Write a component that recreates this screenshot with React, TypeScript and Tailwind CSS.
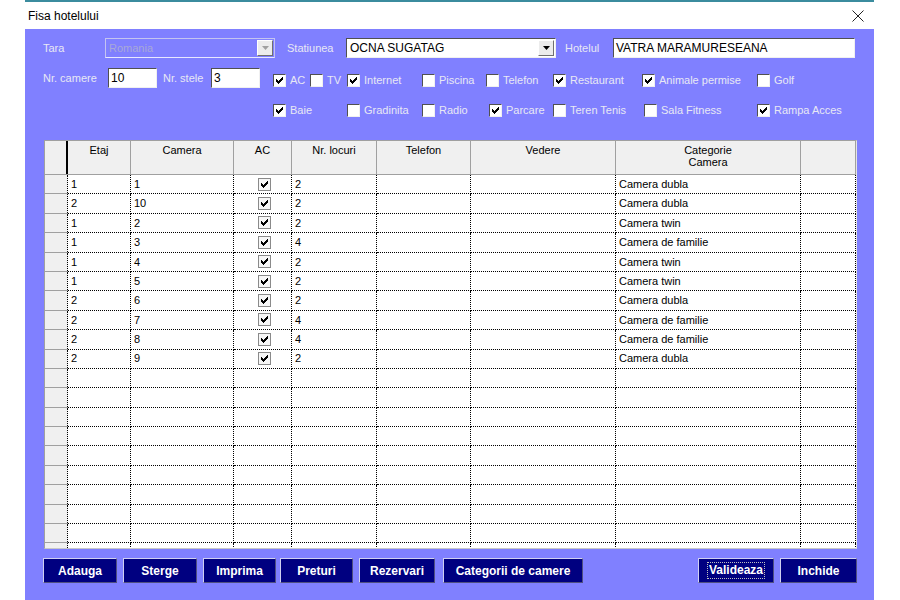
import React from 'react';

const FONT = { fontFamily: '"Liberation Sans", Arial, sans-serif' };

type Room = { etaj: string; camera: string; locuri: string; cat: string };

const ROOMS: Room[] = [
  { etaj: '1', camera: '1', locuri: '2', cat: 'Camera dubla' },
  { etaj: '2', camera: '10', locuri: '2', cat: 'Camera dubla' },
  { etaj: '1', camera: '2', locuri: '2', cat: 'Camera twin' },
  { etaj: '1', camera: '3', locuri: '4', cat: 'Camera de familie' },
  { etaj: '1', camera: '4', locuri: '2', cat: 'Camera twin' },
  { etaj: '1', camera: '5', locuri: '2', cat: 'Camera twin' },
  { etaj: '2', camera: '6', locuri: '2', cat: 'Camera dubla' },
  { etaj: '2', camera: '7', locuri: '4', cat: 'Camera de familie' },
  { etaj: '2', camera: '8', locuri: '4', cat: 'Camera de familie' },
  { etaj: '2', camera: '9', locuri: '2', cat: 'Camera dubla' },
];

const ROW1 = [
  { label: 'AC', on: true, w: 'w-[37px]' },
  { label: 'TV', on: false, w: 'w-[37px]' },
  { label: 'Internet', on: true, w: 'w-[75px]' },
  { label: 'Piscina', on: false, w: 'w-[64px]' },
  { label: 'Telefon', on: false, w: 'w-[67px]' },
  { label: 'Restaurant', on: true, w: 'w-[89px]' },
  { label: 'Animale permise', on: true, w: 'w-[115px]' },
  { label: 'Golf', on: false, w: 'w-[60px]' },
];

const ROW2 = [
  { label: 'Baie', on: true, w: 'w-[74px]' },
  { label: 'Gradinita', on: false, w: 'w-[75px]' },
  { label: 'Radio', on: false, w: 'w-[67px]' },
  { label: 'Parcare', on: true, w: 'w-[64px]' },
  { label: 'Teren Tenis', on: false, w: 'w-[91px]' },
  { label: 'Sala Fitness', on: false, w: 'w-[113px]' },
  { label: 'Rampa Acces', on: true, w: 'w-[100px]' },
];

const GRID_COLS = 'grid grid-cols-[23px_63px_103px_58px_85px_94px_145px_185px_55px]';

// classic 7x7 pixel check mark
function Tick() {
  return (
    <svg viewBox="0 0 7 7" className="w-[7px] h-[7px]" shapeRendering="crispEdges">
      <path d="M6 0h1v3h-1zM5 1h1v3h-1zM4 2h1v3h-1zM3 3h1v3h-1zM2 4h1v3h-1zM1 3h1v3h-1zM0 2h1v3h-1z" fill="#000" />
    </svg>
  );
}

function FormCheck({ on, label, w }: { on: boolean; label: string; w: string }) {
  return (
    <div className={`${w} flex items-center h-[13px] shrink-0`}>
      <div className="w-[13px] h-[13px] bg-white border border-t-[#505050] border-l-[#505050] border-r-[#f0f0f0] border-b-[#f0f0f0] flex items-center justify-center shrink-0">
        {on && <Tick />}
      </div>
      <span className="ml-[4px] text-[11px] leading-none text-[#e8e8f4] whitespace-nowrap">{label}</span>
    </div>
  );
}

function DropArrow({ disabled }: { disabled?: boolean }) {
  return (
    <div className="w-[16px] h-[16px] bg-[#ececec] border border-t-[#fff] border-l-[#fff] border-r-[#707070] border-b-[#707070] flex items-center justify-center">
      <svg viewBox="0 0 7 4" className="w-[7px] h-[4px]">
        <path d="M0 0 H7 L3.5 4 Z" fill={disabled ? '#a0a0a0' : '#000'} />
      </svg>
    </div>
  );
}

function Btn({ label, w, focus }: { label: string; w: string; focus?: boolean }) {
  return (
    <button className={`${w} h-[25px] bg-[#000080] border border-t-[#d0d0f0] border-l-[#d0d0f0] border-r-[#505080] border-b-[#505080] text-white font-bold text-[12px] flex items-center justify-center`}>
      {focus ? (
        <span className="border border-dotted border-[#c0c0c0] px-[1px] leading-[15px]">{label}</span>
      ) : (
        label
      )}
    </button>
  );
}

function HeaderRow() {
  const heads = ['Etaj', 'Camera', 'AC', 'Nr. locuri', 'Telefon', 'Vedere', 'Categorie\nCamera', ''];
  return (
    <div className={`${GRID_COLS} h-[34px] bg-[#f0f0f0] border-b border-[#a0a0a0]`}>
      <div className="border-r-2 border-black" />
      {heads.map((h, i) => (
        <div
          key={i}
          className="border-r border-[#a0a0a0] text-center text-[11px] leading-[12px] pt-[3px] whitespace-pre-line text-black"
        >
          {h}
        </div>
      ))}
    </div>
  );
}

function DataRow({ room }: { room?: Room }) {
  const cell = 'border-r border-b border-dotted border-black text-[11px] text-black pl-[3px] flex items-center';
  return (
    <div className={`${GRID_COLS} h-[19.4px]`}>
      <div className="bg-[#f0f0f0] border-b border-[#a0a0a0] relative">
        <div className="absolute right-0 top-0 bottom-0 border-r border-dotted border-black" />
      </div>
      <div className={cell}>{room?.etaj}</div>
      <div className={cell}>{room?.camera}</div>
      <div className={`${cell} justify-center pl-0`}>
        {room && (
          <div className="w-[13px] h-[13px] border border-[#8a8a8a] bg-[#f6f6f6] flex items-center justify-center">
            <Tick />
          </div>
        )}
      </div>
      <div className={cell}>{room?.locuri}</div>
      <div className={cell} />
      <div className={cell} />
      <div className={cell}>{room?.cat}</div>
      <div className={cell} />
    </div>
  );
}

export default function App() {
  const empties = Array.from({ length: 12 });
  return (
    <div className="w-[900px] h-[600px] bg-white relative overflow-hidden" style={FONT}>
      <div className="ml-[25px] w-[849px] h-[600px] flex flex-col">
        <div className="h-[2px] bg-[#3b8c9e]" />
        <div className="h-[27px] flex items-center justify-between pl-[3px] pr-[10px]">
          <span className="text-[12px] text-black">Fisa hotelului</span>
          <svg viewBox="0 0 12 12" className="w-[12px] h-[12px]">
            <path d="M0.5 0.5 L11.5 11.5 M11.5 0.5 L0.5 11.5" stroke="#222" strokeWidth="1" />
          </svg>
        </div>

        <div className="flex-1 bg-[#8080ff] flex flex-col">
          {/* row 1 */}
          <div className="flex items-center h-[20px] mt-[9px] pl-[18px]">
            <div className="w-[62px] text-[11px] text-[#e8e8f4]">Tara</div>
            <div className="w-[170px] h-[20px] border border-[#c4c4f0] border-b-[#e8e8ff] flex items-center justify-between pr-[1px]">
              <span className="text-[11px] text-[#a8a8d8] pl-[3px]">Romania</span>
              <DropArrow disabled />
            </div>
            <div className="w-[71px] pl-[12px] text-[11px] text-[#e8e8f4]">Statiunea</div>
            <div className="w-[210px] h-[20px] bg-white border border-t-[#505050] border-l-[#505050] border-r-[#f0f0f0] border-b-[#f0f0f0] flex items-center justify-between pr-[1px]">
              <span className="text-[12px] text-black pl-[3px]">OCNA SUGATAG</span>
              <DropArrow />
            </div>
            <div className="w-[57px] pl-[9px] text-[11px] text-[#e8e8f4]">Hotelul</div>
            <div className="w-[242px] h-[20px] bg-white border border-t-[#505050] border-l-[#505050] border-r-[#f0f0f0] border-b-[#f0f0f0] flex items-center">
              <span className="text-[12px] text-black pl-[2px]">VATRA MARAMURESEANA</span>
            </div>
          </div>

          {/* row 2 */}
          <div className="flex items-end h-[20px] mt-[10px] pl-[18px]">
            <div className="w-[65px] h-[20px] flex items-center text-[11px] text-[#e8e8f4]">Nr. camere</div>
            <div className="w-[49px] h-[20px] bg-white border border-t-[#505050] border-l-[#505050] border-r-[#f0f0f0] border-b-[#f0f0f0] flex items-center">
              <span className="text-[12px] text-black pl-[2px]">10</span>
            </div>
            <div className="w-[54px] h-[20px] pl-[6px] flex items-center text-[11px] text-[#e8e8f4]">Nr. stele</div>
            <div className="w-[49px] h-[20px] bg-white border border-t-[#505050] border-l-[#505050] border-r-[#f0f0f0] border-b-[#f0f0f0] flex items-center">
              <span className="text-[12px] text-black pl-[2px]">3</span>
            </div>
            <div className="flex ml-[13px] mb-[1px]">
              {ROW1.map(c => (
                <FormCheck key={c.label} {...c} />
              ))}
            </div>
          </div>

          {/* row 3 */}
          <div className="flex h-[13px] mt-[16px] pl-[248px]">
            {ROW2.map(c => (
              <FormCheck key={c.label} {...c} />
            ))}
          </div>

          {/* grid */}
          <div className="mt-[23px] ml-[19px] w-[813px] h-[409px] border border-[#a0a0a0] border-r-[#e4e4e4] border-b-[#c8c8c8] bg-white overflow-hidden">
            <HeaderRow />
            {ROOMS.map((r, i) => (
              <DataRow key={i} room={r} />
            ))}
            {empties.map((_, i) => (
              <DataRow key={`e${i}`} />
            ))}
          </div>

          {/* buttons */}
          <div className="flex mt-[9px] pl-[18px] pr-[17px]">
            <div className="flex">
              <Btn label="Adauga" w="w-[74px]" />
              <div className="w-[6px]" />
              <Btn label="Sterge" w="w-[74px]" />
              <div className="w-[6px]" />
              <Btn label="Imprima" w="w-[73px]" />
              <div className="w-[4px]" />
              <Btn label="Preturi" w="w-[73px]" />
              <div className="w-[6px]" />
              <Btn label="Rezervari" w="w-[76px]" />
              <div className="w-[8px]" />
              <Btn label="Categorii de camere" w="w-[140px]" />
            </div>
            <div className="flex ml-auto">
              <Btn label="Valideaza" w="w-[76px]" focus />
              <div className="w-[6px]" />
              <Btn label="Inchide" w="w-[77px]" />
            </div>
          </div>
        </div>
      </div>
    </div>
  );
}
